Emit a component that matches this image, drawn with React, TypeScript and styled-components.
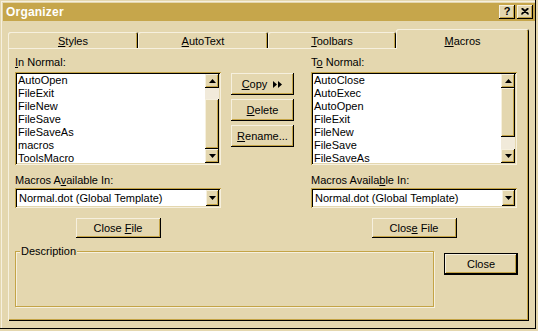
import React from 'react';
import styled, { createGlobalStyle, css } from 'styled-components';

const C = {
  face: '#e4d7af',
  light: '#f6f0de',
  shadow: '#c4a446',
  dark: '#000000',
  title: '#c6a64b',
  track: '#f1eada',
};

const Global = createGlobalStyle`
  html, body { margin: 0; padding: 0; background: ${C.face}; }
  body { font-family: "Liberation Sans", Arial, sans-serif; font-size: 11px; color: #000; }
  * { box-sizing: border-box; }
`;

const raised = css`
  background: ${C.face};
  box-shadow: inset -1px -1px ${C.dark}, inset 1px 1px ${C.light}, inset -2px -2px ${C.shadow};
`;

const sunken = css`
  box-shadow: inset 1px 1px ${C.shadow}, inset -1px -1px ${C.light}, inset 2px 2px ${C.dark}, inset -2px -2px ${C.face};
`;

const Window = styled.div`
  width: 538px;
  height: 331px;
  background: ${C.face};
  padding: 3px;
  display: flex;
  flex-direction: column;
  box-shadow: inset -2px -2px ${C.face}, inset -3px -3px ${C.dark}, inset 1px 1px ${C.face}, inset 2px 2px ${C.light};
`;

const TitleBar = styled.div`
  height: 18px;
  background: ${C.title};
  display: flex;
  align-items: center;
  justify-content: space-between;
  padding: 0 2px 0 3px;
`;

const TitleText = styled.span`
  color: #fff;
  font-weight: bold;
  font-size: 12px;
  letter-spacing: 0.2px;
`;

const TitleButtons = styled.div`
  display: flex;
  gap: 2px;
`;

const TitleBtn = styled.div`
  ${raised};
  width: 16px;
  height: 14px;
  display: flex;
  align-items: center;
  justify-content: center;
  font-weight: bold;
  font-size: 11px;
  line-height: 1;
  padding-bottom: 1px;
`;

const Body = styled.div`
  flex: 1;
  display: flex;
  flex-direction: column;
  padding: 8px 6px 7px 5px;
`;

const TabRow = styled.div`
  height: 19px;
  display: flex;
  align-items: flex-end;
`;

const Tab = styled.div<{ $w: number; $active?: boolean }>`
  width: ${(p) => p.$w}px;
  height: ${(p) => (p.$active ? 20 : 16)}px;
  margin-bottom: ${(p) => (p.$active ? -1 : 0)}px;
  position: relative;
  z-index: ${(p) => (p.$active ? 1 : 0)};
  background: ${C.face};
  border-radius: 2px 2px 0 0;
  box-shadow: inset 1px 1px ${C.light}, inset -1px 0 ${C.dark}, inset -2px 0 ${C.shadow};
  display: flex;
  justify-content: center;
  align-items: flex-start;
  padding-top: ${(p) => (p.$active ? 6 : 3)}px;
  line-height: 13px;
`;

const Panel = styled.div`
  flex: 1;
  display: flex;
  flex-direction: column;
  padding: 8px 12px 13px 7px;
  box-shadow: inset 1px 1px ${C.light}, inset -1px -1px ${C.dark}, inset -2px -2px ${C.shadow};
`;

const TopArea = styled.div`
  display: flex;
  align-items: flex-start;
`;

const Column = styled.div<{ $right?: boolean }>`
  width: 206px;
  display: flex;
  flex-direction: column;
  margin-left: ${(p) => (p.$right ? 'auto' : '0')};
`;

const Label = styled.div<{ $mt?: number }>`
  line-height: 13px;
  height: 13px;
  margin-top: ${(p) => p.$mt ?? 0}px;
  white-space: nowrap;
`;

const Mn = styled.span`
  text-decoration: underline;
  text-underline-offset: 1px;
`;

const ListBox = styled.div`
  ${sunken};
  margin-top: 3px;
  height: 93px;
  background: #fff;
  padding: 2px;
  display: flex;
`;

const Items = styled.div`
  flex: 1;
  padding-left: 1px;
  overflow: hidden;
`;

const Item = styled.div`
  line-height: 13px;
  height: 13px;
  white-space: nowrap;
`;

const ScrollBar = styled.div`
  width: 14px;
  display: flex;
  flex-direction: column;
  background: ${C.track};
`;

const ScrollBtn = styled.div`
  ${raised};
  height: 14px;
  flex: none;
  display: flex;
  align-items: center;
  justify-content: center;
`;

const TrackGap = styled.div<{ $h: number }>`
  height: ${(p) => p.$h}px;
  flex: none;
`;

const Thumb = styled.div<{ $h: number }>`
  ${raised};
  height: ${(p) => p.$h}px;
  flex: none;
`;

const TrackRest = styled.div`
  flex: 1;
`;

const Combo = styled.div`
  ${sunken};
  margin-top: 1px;
  height: 20px;
  background: #fff;
  padding: 2px;
  display: flex;
  align-items: stretch;
`;

const ComboText = styled.div`
  flex: 1;
  padding-left: 2px;
  line-height: 16px;
  white-space: nowrap;
`;

const DropBtn = styled.div`
  ${raised};
  width: 13px;
  display: flex;
  align-items: center;
  justify-content: center;
`;

const Button = styled.div<{ $w: number; $h: number }>`
  ${raised};
  width: ${(p) => p.$w}px;
  height: ${(p) => p.$h}px;
  display: flex;
  align-items: center;
  justify-content: center;
  gap: 6px;
  line-height: 13px;
  white-space: nowrap;
`;

const DefaultButton = styled(Button)`
  outline: 1px solid ${C.dark};
`;

const CenterRow = styled.div`
  display: flex;
  justify-content: center;
  margin-top: 10px;
`;

const Middle = styled.div`
  margin-left: 10px;
  margin-top: 17px;
  display: flex;
  flex-direction: column;
  gap: 4px;
`;

const BottomArea = styled.div`
  display: flex;
  align-items: flex-start;
  margin-top: 13px;
`;

const GroupBox = styled.div`
  position: relative;
  width: 420px;
  height: 56px;
  border: 1px solid ${C.shadow};
  box-shadow: inset 1px 1px ${C.light}, 1px 1px ${C.light};
`;

const Legend = styled.span`
  position: absolute;
  top: -7px;
  left: 4px;
  padding: 0 1px;
  background: ${C.face};
  line-height: 13px;
`;

const CloseWrap = styled.div`
  margin-left: 11px;
  margin-top: 3px;
`;

const Up = () => (
  <svg width="7" height="4" viewBox="0 0 7 4"><polygon points="3.5,0 7,4 0,4" fill="#000" /></svg>
);
const Down = () => (
  <svg width="7" height="4" viewBox="0 0 7 4"><polygon points="0,0 7,0 3.5,4" fill="#000" /></svg>
);
const Arrows = () => (
  <svg width="10" height="7" viewBox="0 0 10 7">
    <polygon points="0,0 4,3.5 0,7" fill="#000" />
    <polygon points="5,0 9,3.5 5,7" fill="#000" />
  </svg>
);
const XIcon = () => (
  <svg width="8" height="7" viewBox="0 0 8 7">
    <path d="M0.5 0.5 L7.5 6.5 M7.5 0.5 L0.5 6.5 M1.5 0.5 L7.5 5.8 M6.5 0.5 L0.5 5.8" stroke="#000" strokeWidth="1.2" fill="none" />
  </svg>
);

type ListProps = { items: string[]; gap: number; thumb: number };
const List = ({ items, gap, thumb }: ListProps) => (
  <ListBox>
    <Items>
      {items.map((t) => (
        <Item key={t}>{t}</Item>
      ))}
    </Items>
    <ScrollBar>
      <ScrollBtn><Up /></ScrollBtn>
      <TrackGap $h={gap} />
      <Thumb $h={thumb} />
      <TrackRest />
      <ScrollBtn><Down /></ScrollBtn>
    </ScrollBar>
  </ListBox>
);

const ComboBox = () => (
  <Combo>
    <ComboText>Normal.dot (Global Template)</ComboText>
    <DropBtn><Down /></DropBtn>
  </Combo>
);

export default function App() {
  return (
    <>
      <Global />
      <Window>
        <TitleBar>
          <TitleText>Organizer</TitleText>
          <TitleButtons>
            <TitleBtn>?</TitleBtn>
            <TitleBtn><XIcon /></TitleBtn>
          </TitleButtons>
        </TitleBar>
        <Body>
          <TabRow>
            <Tab $w={130}><span><Mn>S</Mn>tyles</span></Tab>
            <Tab $w={130}><span><Mn>A</Mn>utoText</span></Tab>
            <Tab $w={128}><span><Mn>T</Mn>oolbars</span></Tab>
            <Tab $w={133} $active><span><Mn>M</Mn>acros</span></Tab>
          </TabRow>
          <Panel>
            <TopArea>
              <Column>
                <Label><Mn>I</Mn>n Normal:</Label>
                <List
                  items={['AutoOpen', 'FileExit', 'FileNew', 'FileSave', 'FileSaveAs', 'macros', 'ToolsMacro']}
                  gap={11}
                  thumb={50}
                />
                <Label $mt={9}>Macros A<Mn>v</Mn>ailable In:</Label>
                <ComboBox />
                <CenterRow>
                  <Button $w={85} $h={20}><span>Close <Mn>F</Mn>ile</span></Button>
                </CenterRow>
              </Column>
              <Middle>
                <Button $w={63} $h={22}><span><Mn>C</Mn>opy</span><Arrows /></Button>
                <Button $w={63} $h={22}><span><Mn>D</Mn>elete</span></Button>
                <Button $w={63} $h={22}><span><Mn>R</Mn>ename...</span></Button>
              </Middle>
              <Column $right>
                <Label>T<Mn>o</Mn> Normal:</Label>
                <List
                  items={['AutoClose', 'AutoExec', 'AutoOpen', 'FileExit', 'FileNew', 'FileSave', 'FileSaveAs']}
                  gap={0}
                  thumb={49}
                />
                <Label $mt={9}>Macros Availa<Mn>b</Mn>le In:</Label>
                <ComboBox />
                <CenterRow>
                  <Button $w={85} $h={20}><span>Clos<Mn>e</Mn> File</span></Button>
                </CenterRow>
              </Column>
            </TopArea>
            <BottomArea>
              <GroupBox>
                <Legend>Description</Legend>
              </GroupBox>
              <CloseWrap>
                <DefaultButton $w={72} $h={20}>Close</DefaultButton>
              </CloseWrap>
            </BottomArea>
          </Panel>
        </Body>
      </Window>
    </>
  );
}
